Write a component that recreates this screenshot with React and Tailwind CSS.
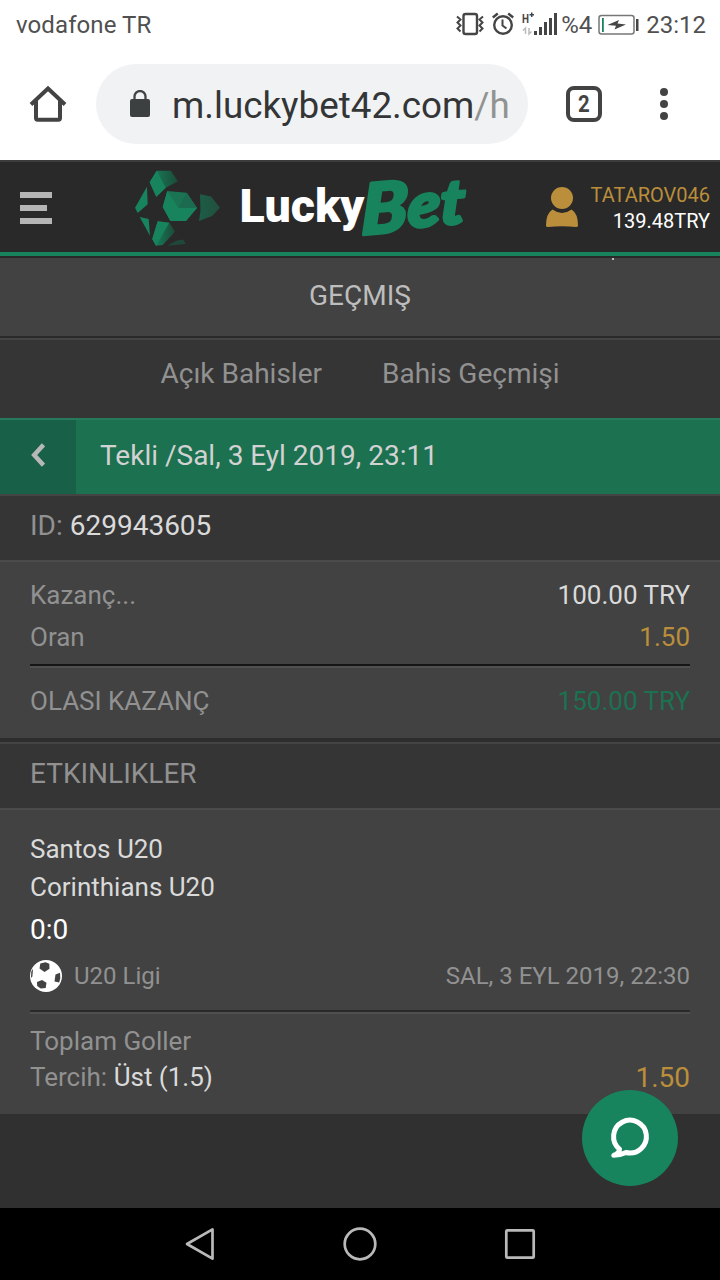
import React from "react";

export default function App() {
  return (
    <div className="relative w-[720px] h-[1280px] flex flex-col overflow-hidden bg-[#303030] font-['Roboto',sans-serif]">
      <StatusBar />
      <BrowserBar />
      <SiteHeader />
      <div className="h-[80px] shrink-0 bg-[#424242] border-b-2 border-[#2a2a2a] flex items-center justify-center pb-[2px] text-[28px] text-[#bdbdbd]">
        GEÇMIŞ
      </div>
      <div className="h-[80px] shrink-0 bg-[#353535] border-t-2 border-[#444444] flex items-center pl-[160.5px] gap-[60px] pb-[10px] text-[28px] text-[#919191]">
        <span>Açık Bahisler</span>
        <span>Bahis Geçmişi</span>
      </div>
      <BetSlip />
      <Events />
      <div className="flex-1" />
      <NavBar />
      <button className="absolute left-[582px] top-[1090px] w-[96px] h-[96px] rounded-full bg-[#17845d] flex items-center justify-center">
        <svg width="96" height="96" viewBox="582 1090 96 96" fill="none" stroke="#fff" strokeWidth="5" strokeLinejoin="round" strokeLinecap="round">
          <path d="M619.500 1149.200A16.400 16.400 0 1 1 626 1152.500Q620 1155.300 613.800 1155.300Q619.500 1153 619.500 1149.200Z" />
        </svg>
      </button>
    </div>
  );
}

function StatusBar() {
  return (
    <div className="h-[50px] shrink-0 bg-white flex items-center justify-between pl-[16px] pr-[14px] text-[24px] leading-[50px] text-[#505050]">
      <span className="tracking-[0.1px]">vodafone TR</span>
      <div className="flex items-center">
        <svg width="28" height="50" viewBox="456 0 28 50" fill="none" stroke="#454545">
          <rect x="463.5" y="14" width="13.5" height="20" rx="2" strokeWidth="2.4" />
          <path d="M457 16.5l3.5 3-3 3 3 3-3 3 3 3M483 16.5l-3.5 3 3 3-3 3 3 3-3 3" strokeWidth="2" />
        </svg>
        <svg className="ml-[8px]" width="22" height="50" viewBox="492 0 22 50" fill="none" stroke="#454545">
          <circle cx="503" cy="25" r="8.8" strokeWidth="2.4" />
          <path d="M492.8 17.5l5-4M513.2 17.5l-5-4" strokeWidth="2.4" />
          <path d="M502.5 19.5v6l4 3" strokeWidth="2" />
        </svg>
        <svg className="ml-[8px]" width="36" height="50" viewBox="522 0 36 50" fill="#454545">
          <text x="522" y="23" fontSize="13" fontWeight="700" textLength="7" lengthAdjust="spacingAndGlyphs">H</text>
          <path d="M529.5 14h1.5v-1.5h1.5v1.5h1.5v1.5h-1.5v1.5h-1.5v-1.5h-1.5z" />
          <path d="M525.5 34v-6l-2.5 2.5M529 28v6l2.5-2.5" fill="none" stroke="#bbb" strokeWidth="1.5" />
          <path d="M534 31h3v4h-3zM539 27h3v8h-3zM544 22h3v13h-3zM549 18h3v17h-3zM554 13h3v22h-3z" />
        </svg>
        <span className="ml-[3px] w-[31px]">%4</span>
        <svg className="ml-[6px]" width="42" height="50" viewBox="598 0 42 50">
          <rect x="599" y="15.5" width="35" height="18.5" rx="2.5" fill="none" stroke="#777" strokeWidth="1.5" />
          <path d="M602 18h1.8v14h-1.8z" fill="#17845d" />
          <path d="M636 19h2.5v12H636z" fill="#454545" />
          <path d="M607.5 25l11.500-5-1.500 3.500 8.500.9-11.500 5 1.500-3.700z" fill="#454545" />
        </svg>
        <span className="ml-[6px]">23:12</span>
      </div>
    </div>
  );
}

function BrowserBar() {
  return (
    <div className="h-[110px] shrink-0 bg-white flex items-center pl-[28px] pb-[2px]">
      <svg width="40" height="40" viewBox="28 84 40 40" fill="none" stroke="#434343" strokeWidth="4">
        <path d="M31 104.500L48 88.500l17 16M36 100.500V118q0 1.700 1.700 1.700h20.600q1.700 0 1.700-1.700v-17.500" />
      </svg>
      <div className="ml-[28px] w-[432px] h-[80px] rounded-full bg-[#f1f2f4] flex items-center pl-[34px]">
        <svg width="20" height="28" viewBox="130 90 20 28">
          <path d="M134.500 100v-3.500a5.500 5.500 0 0 1 11 0v3.500" fill="none" stroke="#434343" strokeWidth="2.300" />
          <rect x="130" y="99" width="20" height="18" rx="2" fill="#3d4040" />
        </svg>
        <span className="ml-[22px] pt-[4px] w-[340px] overflow-hidden whitespace-nowrap text-[36.8px] leading-[48px] text-[#333536]">
          m.luckybet42.com<span className="text-[#919391]">/h</span>
        </span>
      </div>
      <div className="ml-[38px] w-[36px] h-[36px] rounded-[8px] border-4 border-[#434343] flex items-center justify-center text-[24px] font-bold text-[#434343]">
        <span className="scale-x-85">2</span>
      </div>
      <div className="ml-[58px] flex flex-col gap-[4px]">
        <i className="w-[8px] h-[8px] rounded-full bg-[#434343]" />
        <i className="w-[8px] h-[8px] rounded-full bg-[#434343]" />
        <i className="w-[8px] h-[8px] rounded-full bg-[#434343]" />
      </div>
    </div>
  );
}

function SiteHeader() {
  return (
    <div className="h-[98px] shrink-0 bg-[#292929] border-t-2 border-[#3c3c3c] flex flex-col">
      <div className="h-[90px] flex items-center">
        <div className="ml-[20px] w-[32px] flex flex-col gap-[7px] pt-[2px]">
          <i className="h-[6px] bg-[#b5b5b5]" />
          <i className="h-[6px] w-[27px] bg-[#b5b5b5]" />
          <i className="h-[6px] bg-[#b5b5b5]" />
        </div>
        <Logo />
        <svg className="ml-[70px]" width="34" height="90" viewBox="545 162 34 90" fill="#ba8e3a">
          <circle cx="562" cy="198" r="11" />
          <path d="M552.500 209.500q9.500 7 19 0 6.500 4 6.500 16 0 1.500-2 1.500-14-1.500-28 0-2 0-2-1.500 0-12 6.500-16z" />
        </svg>
        <div className="flex-1 pr-[10px] pt-[2px] flex flex-col items-end text-[20px] leading-[26px]">
          <span className="text-[#ba8e3a]">TATAROV046</span>
          <span className="text-white">139.48TRY</span>
        </div>
      </div>
      <div className="h-[4px] bg-[#17845d]" />
      <div className="h-[2px] bg-[#292929]" />
      <div className="relative">
        <i className="absolute left-[612px] top-0 w-[2px] h-[2px] bg-[#bdbdbd]" />
      </div>
    </div>
  );
}

function Logo() {
  return (
    <svg className="ml-[78px] overflow-visible" width="345" height="90" viewBox="130 162 345 90">
      <defs>
        <linearGradient id="fade" x1="0" x2="1">
          <stop offset="0" stopColor="#17845d" />
          <stop offset="1" stopColor="#1b4a38" />
        </linearGradient>
        <linearGradient id="dim" x1="0" x2="1">
          <stop offset="0" stopColor="#1c5d45" />
          <stop offset="1" stopColor="#22503e" />
        </linearGradient>
      </defs>
      <path fill="#17845d" d="M147 186.700l.7 17.600-10 8.700-2.700-5.300zM139.700 217l9 2 1.300 16.700z" />
      <path fill="url(#fade)" d="M149.700 182.300l7-11.600h14l7.300 10.600-12.300 6.400-9.400 9z" />
      <path fill="#17845d" d="M149.700 182.300l7-11.600 9 17-9.400 9z" />
      <path fill="url(#fade)" d="M157.700 221.300l11.600 1.400 5.700 9-12.300 13.300-6.700.7-3.700-6.700z" />
      <path fill="#17845d" d="M157.700 221.300l11.600 1.400L156 245.700l-3.700-6.700z" />
      <path fill="#1a7454" d="M167.300 191l19.400 1.700L197 208l-11 13h-15.700l-7.600-14z" />
      <path fill="#17845d" d="M167.300 191l11 16.700-8 13-7.600-13.700zM178.300 207.700H197L186 221h-15.700z" />
      <path fill="#1c6b50" d="M186.700 192.700L197 208l-18.700-.3z" />
      <path fill="url(#dim)" d="M200 194.300l11 2.200 9 11.200-8 8.300-13 5 1.500-10z" />
      <path fill="#20483a" d="M167 245.700l10-5.200 6-1 3 4.500z" />
      <text transform="translate(361 235) rotate(-5) skewX(-6)" fill="#17845d" stroke="#17845d" strokeWidth="3" strokeLinejoin="round" fontFamily="Lato" fontStyle="italic" fontWeight="900" textLength="104" lengthAdjust="spacingAndGlyphs">
        <tspan fontSize="70">B</tspan>
        <tspan fontSize="62" dy="-3">et</tspan>
      </text>
      <text x="239.500" y="222" fill="#fff" stroke="#292929" strokeWidth="1.500" paintOrder="stroke" fontFamily="Roboto" fontWeight="900" fontSize="47" textLength="125" lengthAdjust="spacingAndGlyphs">Lucky</text>
    </svg>
  );
}

function BetSlip() {
  return (
    <div className="shrink-0">
      <div className="h-[76px] flex bg-[#1c7150] text-[28px] text-[#d2d2d2] border-t-2 border-[#277a5b]">
        <div className="w-[76px] bg-[#196048] flex items-center justify-center pb-[4px]">
          <svg width="14" height="24" viewBox="0 0 14 24" fill="none" stroke="#b8b8b8" strokeWidth="4.500">
            <path d="M12.500 1.800L3.200 12l9.300 10.200" />
          </svg>
        </div>
        <span className="pl-[24px] leading-[72px]">Tekli /Sal, 3 Eyl 2019, 23:11</span>
      </div>
      <div className="h-[66px] bg-[#353535] border-t-2 border-[#444444] px-[30px] text-[28px] leading-[59px] text-[#919191]">
        ID: <span className="text-[#dadada]">629943605</span>
      </div>
      <div className="h-[178px] bg-[#424242] border-t-2 border-[#4b4b4b] px-[30px] pt-[12px] text-[26px] leading-[42px] text-[#919191]">
        <div className="flex justify-between">
          <span>Kazanç...</span>
          <span className="text-[#dadada]">100.00 TRY</span>
        </div>
        <div className="flex justify-between">
          <span>Oran</span>
          <span className="text-[#ba8e3a]">1.50</span>
        </div>
        <div className="mt-[6px] h-[4px] border-t-2 border-b-2 border-t-[#161616] border-b-[#505050]" />
        <div className="mt-[12px] flex justify-between">
          <span>OLASI KAZANÇ</span>
          <span className="text-[#1c7150]">150.00 TRY</span>
        </div>
      </div>
    </div>
  );
}

function Events() {
  return (
    <div className="shrink-0">
      <div className="h-[4px] bg-[#2d2d2d]" />
      <div className="h-[66px] bg-[#353535] border-t-2 border-[#444444] px-[30px] text-[28px] leading-[59px] text-[#919191]">
        ETKINLIKLER
      </div>
      <div className="h-[306px] bg-[#424242] border-t-2 border-[#4b4b4b] px-[30px] pt-[20px] text-[26px] text-[#919191]">
        <div className="leading-[38px] text-[#dadada]">Santos U20</div>
        <div className="leading-[38px] text-[#dadada]">Corinthians U20</div>
        <div className="h-[46px] text-[28px] leading-[48px] text-white">0:0</div>
        <div className="h-[48px] flex items-center text-[24px]">
          <Ball />
          <span className="ml-[12px]">U20 Ligi</span>
          <span className="ml-auto">SAL, 3 EYL 2019, 22:30</span>
        </div>
        <div className="mt-[10px] h-[4px] border-t-2 border-b-2 border-t-[#292929] border-b-[#505050]" />
        <div className="mt-[9px] leading-[36px]">Toplam Goller</div>
        <div className="flex justify-between leading-[36px]">
          <span>Tercih: <span className="text-[#dadada]">Üst (1.5)</span></span>
          <span className="pt-[1px] text-[28px] text-[#ba8e3a]">1.50</span>
        </div>
      </div>
    </div>
  );
}

function Ball() {
  return (
    <svg width="32" height="32" viewBox="0 0 32 32">
      <circle cx="16" cy="16" r="16" fill="#fff" />
      <path fill="#424242" d="M10.300 3.500l5.200-1.300 3.800 1.500.2 5-5 3.300-5-3.500zM25.500 14.500l4.500-1.700q1 5-.8 9.700l-4.700-1zM7 22l5-2 4.500 2.800-.8 5.200-5 .6-3.500-2.600zM1.300 11.500l1.700-2.700-.6 7.700L1 18z" />
    </svg>
  );
}

function NavBar() {
  return (
    <div className="h-[72px] shrink-0 bg-black flex items-center justify-center gap-[124px]">
      <svg width="36" height="36" viewBox="0 0 36 36" fill="none" stroke="#b9b9b9" strokeWidth="2.700" strokeLinejoin="round">
        <path d="M5 18L30.500 3.300v29.400z" />
      </svg>
      <svg width="36" height="36" viewBox="0 0 36 36" fill="none" stroke="#b9b9b9" strokeWidth="2.700">
        <circle cx="18" cy="18" r="15.300" />
      </svg>
      <svg width="36" height="36" viewBox="0 0 36 36" fill="none" stroke="#b9b9b9" strokeWidth="2.700">
        <rect x="4.300" y="4.300" width="27.400" height="27.400" rx="1" />
      </svg>
    </div>
  );
}
